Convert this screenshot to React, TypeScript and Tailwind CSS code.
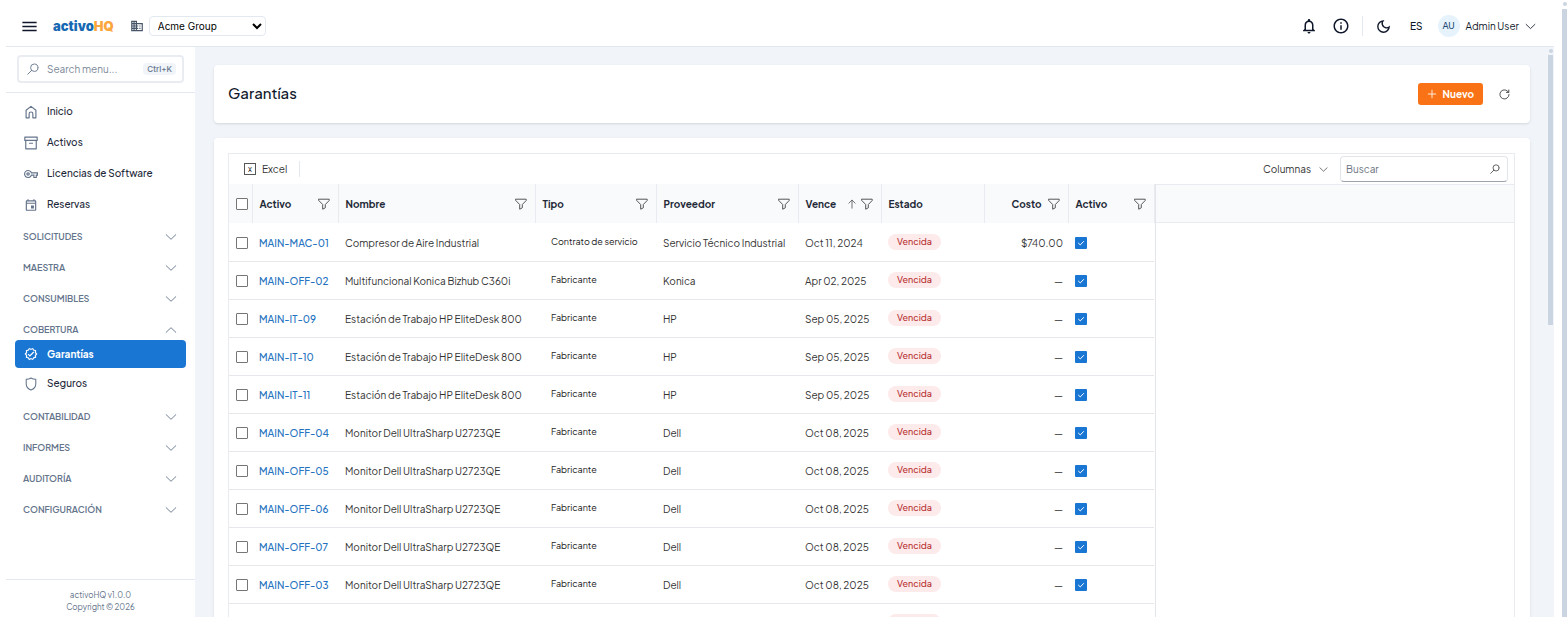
import React from 'react'
import { MdMenu, MdDomain, MdNotificationsNone, MdInfoOutline, MdOutlineVerified, MdOutlineVpnKey, MdOutlineEvent, MdOutlineDarkMode } from 'react-icons/md'

type IconProps = { className?: string }

const Stroke = ({ d, className = 'size-3', width = 1 }: { d: string; className?: string; width?: number }) => (
  <svg viewBox="0 0 12 12" className={className} fill="none" stroke="currentColor" strokeWidth={width} strokeLinecap="round" strokeLinejoin="round" aria-hidden="true">
    <path d={d} />
  </svg>
)

const ChevronDown = (p: IconProps) => <Stroke d="M1.2 3.7 6 8.3 10.8 3.7" width={0.9} {...p} />
const ChevronUp = (p: IconProps) => <Stroke d="M1.2 8.3 6 3.7 10.8 8.3" width={0.9} {...p} />
const Filter = (p: IconProps) => <Stroke d="M.8 1.2h10.4v1.3L7.3 6.5v3.3l-2.600 1.4V6.5L.8 2.5z" {...p} />
const ArrowUp = (p: IconProps) => <Stroke d="M6 11V1.5M2.3 5 6 1.3 9.7 5" {...p} />
const Search = (p: IconProps) => <Stroke d="M11 4.7a3.7 3.7 0 1 1-7.4 0a3.7 3.7 0 1 1 7.4 0M4.7 7.3.8 11.2" width={0.9} {...p} />
const Plus = (p: IconProps) => <Stroke d="M6 1.5v9M1.5 6h9" {...p} />
const Refresh = (p: IconProps) => <Stroke d="M10.7 1v2.7H8M10.5 3.7A5 5 0 1 0 11 6" width={0.9} {...p} />
const Home = (p: IconProps) => <Stroke d="M1.8 4.5 6 1.2l4.2 3.3V11H7.600V7.600a1.600 1.600 0 0 0-3.200 0V11H1.800z" {...p} />
const Archive = (p: IconProps) => <Stroke d="M.7 1h10.600v2.800H.7zM1.500 3.800V11h9V3.800M4.700 6.200h2.600" {...p} />
const Shield = (p: IconProps) => <Stroke d="M6 .9C4.8 1.7 3.3 2 1.9 2v4c0 2.500 1.600 4.200 4.100 5.200 2.500-1 4.100-2.700 4.100-5.200V2C8.700 2 7.200 1.700 6 .9z" width={0.9} {...p} />

const links = [
  { label: 'Inicio', icon: Home },
  { label: 'Activos', icon: Archive },
  { label: 'Licencias de Software', icon: MdOutlineVpnKey },
  { label: 'Reservas', icon: MdOutlineEvent },
]

const sectionsTop = ['Solicitudes', 'Maestra', 'Consumibles']
const sectionsBottom = ['Contabilidad', 'Informes', 'Auditoría', 'Configuración']

const rows = [
  ['MAIN-MAC-01', 'Compresor de Aire Industrial', 'Contrato de servicio', 'Servicio Técnico Industrial', 'Oct 11, 2024', '$740.00'],
  ['MAIN-OFF-02', 'Multifuncional Konica Bizhub C360i', 'Fabricante', 'Konica', 'Apr 02, 2025', '—'],
  ['MAIN-IT-09', 'Estación de Trabajo HP EliteDesk 800', 'Fabricante', 'HP', 'Sep 05, 2025', '—'],
  ['MAIN-IT-10', 'Estación de Trabajo HP EliteDesk 800', 'Fabricante', 'HP', 'Sep 05, 2025', '—'],
  ['MAIN-IT-11', 'Estación de Trabajo HP EliteDesk 800', 'Fabricante', 'HP', 'Sep 05, 2025', '—'],
  ['MAIN-OFF-04', 'Monitor Dell UltraSharp U2723QE', 'Fabricante', 'Dell', 'Oct 08, 2025', '—'],
  ['MAIN-OFF-05', 'Monitor Dell UltraSharp U2723QE', 'Fabricante', 'Dell', 'Oct 08, 2025', '—'],
  ['MAIN-OFF-06', 'Monitor Dell UltraSharp U2723QE', 'Fabricante', 'Dell', 'Oct 08, 2025', '—'],
  ['MAIN-OFF-07', 'Monitor Dell UltraSharp U2723QE', 'Fabricante', 'Dell', 'Oct 08, 2025', '—'],
  ['MAIN-OFF-03', 'Monitor Dell UltraSharp U2723QE', 'Fabricante', 'Dell', 'Oct 08, 2025', '—'],
  ['MAIN-OFF-08', 'Monitor Dell UltraSharp U2723QE', 'Fabricante', 'Dell', 'Oct 08, 2025', '—'],
]

const columns = [
  { label: 'Activo', filter: true },
  { label: 'Nombre', filter: true },
  { label: 'Tipo', filter: true },
  { label: 'Proveedor', filter: true },
  { label: 'Vence', filter: true, sorted: true },
  { label: 'Estado', filter: false },
  { label: 'Costo', filter: true, right: true },
  { label: 'Activo', filter: true },
]

const Header = () => (
  <header className="flex items-center h-[47px] shrink-0 pt-[6px] pl-[14px] pr-[18px] border-b border-[#e2e8f0] bg-white text-[#0f172a]">
    <button aria-label="Menú" className="mr-[14px]"><MdMenu size={19} /></button>
    <a href="#" className="mr-4 font-[Inter] text-[13px] leading-4 font-black text-[#1668b3]">activo<span className="text-[#fba63c]">HQ</span></a>
    <MdDomain size={14} className="mr-[5px] text-[#475569]" />
    <select aria-label="Empresa" className="w-[117px] h-5 pl-1 rounded-sm border border-[#e2e8f0] bg-white font-[Inter] text-[10px] text-black">
      <option>Acme Group</option>
    </select>
    <div className="flex items-center ml-auto">
      <button aria-label="Notificaciones" className="mr-[14px]"><MdNotificationsNone size={18} /></button>
      <button aria-label="Información" className="mr-3"><MdInfoOutline size={18} /></button>
      <div className="w-px h-5 mr-3 bg-[#e2e8f0]" />
      <button aria-label="Tema oscuro" className="mr-[18px]"><MdOutlineDarkMode size={17} /></button>
      <button className="mr-[15px] text-[10px] font-medium">ES</button>
      <button className="flex items-center gap-[6px] text-[10px]">
        <span className="flex items-center justify-center size-[22px] rounded-full bg-[#e6f3fd] text-[9px] font-medium text-[#1e4a73]">AU</span>
        <span>Admin User</span>
        <ChevronDown className="size-[11px]" />
      </button>
    </div>
  </header>
)

const Section = ({ label, open }: { label: string; open?: boolean }) => (
  <button aria-expanded={!!open} className="flex items-center justify-between w-full h-[31px] pl-[17px] pr-[18px] text-[9px] font-semibold uppercase text-[#64748b]">
    {label}
    {open ? <ChevronUp className="size-3" /> : <ChevronDown className="size-3" />}
  </button>
)

const Sidebar = () => (
  <aside className="flex flex-col w-[189px] shrink-0 bg-white text-[10px] font-medium text-[#1e293b]">
    <div className="px-[11px] pt-2 pb-[9px] border-b border-[#e2e8f0]">
      <label className="flex items-center h-7 pl-2 pr-[6px] border-2 border-[#e9edf2] rounded-sm text-[#64748b]">
        <Search className="size-3" />
        <input aria-label="Search menu" placeholder="Search menu..." className="flex-1 min-w-0 ml-2 text-[10px] font-normal outline-none placeholder:text-[#7b8797]" />
        <kbd className="px-1 rounded-sm bg-[#f1f5f9] font-[Inter] text-[8px] leading-3 font-medium">Ctrl+K</kbd>
      </label>
    </div>
    <nav className="flex flex-col pt-[3px]">
      {links.map(({ label, icon: Icon }) => (
        <a key={label} href="#" className="flex items-center gap-[9px] h-[31px] pl-[18px]">
          <Icon className="size-[14px] text-[#64748b]" />{label}
        </a>
      ))}
      <div className="pt-px">
        {sectionsTop.map((s) => <Section key={s} label={s} />)}
        <Section label="Cobertura" open />
      </div>
      <a href="#" aria-current="page" className="flex items-center gap-[9px] h-7 mx-[9px] -mt-[5px] pl-[9px] rounded-sm bg-[#1976d2] font-bold text-white">
        <MdOutlineVerified className="size-[14px]" />Garantías
      </a>
      <a href="#" className="flex items-center gap-[9px] h-[31px] pl-[18px]">
        <Shield className="size-[14px] text-[#64748b]" />Seguros
      </a>
      <div className="pt-[2px]">
        {sectionsBottom.map((s) => <Section key={s} label={s} />)}
      </div>
    </nav>
    <footer className="mt-auto pt-[9px] pb-1 border-t border-[#e2e8f0] text-center text-[8px] leading-3 font-normal text-[#64748b]">
      <p>activoHQ v1.0.0</p>
      <p>Copyright © 2026</p>
    </footer>
  </aside>
)

const boxClass = 'block size-3 appearance-none rounded-[1px] border border-[#767676] bg-white'

const DataTable = () => (
  <table className="w-[925px] shrink-0 table-fixed border-collapse text-[10px] leading-3 text-[#333333]">
    <colgroup>
      <col className="w-[23px]" />
      <col className="w-[86px]" />
      <col className="w-[197px]" />
      <col className="w-[121px]" />
      <col className="w-[142px]" />
      <col className="w-[83px]" />
      <col className="w-[103px]" />
      <col className="w-[84px]" />
      <col className="w-[86px]" />
    </colgroup>
    <thead>
      <tr className="h-[39px] bg-[#f8fafc] text-[#1f2937]">
        <th className="pl-[7px] border-r border-[#e8ebef]"><input type="checkbox" aria-label="Seleccionar todo" className={boxClass} /></th>
        {columns.map((c, i) => (
          <th key={i} className="pl-[7px] pr-[6px] border-r border-[#e8ebef] font-bold">
            <div className={c.right ? 'flex items-center justify-end gap-[6px] pr-[2px]' : 'flex items-center gap-1 pr-[2px]'}>
              <span className={c.right ? '' : 'mr-auto'}>{c.label}</span>
              {c.sorted && <ArrowUp className="size-[10px] text-[#555555]" />}
              {c.filter && <button aria-label={`Filtrar ${c.label}`}><Filter className="block size-3 text-[#555555]" /></button>}
            </div>
          </th>
        ))}
      </tr>
    </thead>
    <tbody>
      {rows.map(([code, name, type, vendor, due, cost]) => (
        <tr key={code} className="h-[38px] border-b border-[#e5e7eb]">
          <td className="pl-[7px] pt-[2px]"><input type="checkbox" aria-label={`Seleccionar ${code}`} className={boxClass} /></td>
          <td className="pl-[7px] pt-[2px] font-medium whitespace-nowrap"><a href="#" className="text-[#2472c0]">{code}</a></td>
          <td className="pl-[7px] pt-[2px] whitespace-nowrap">{name}</td>
          <td className="pl-4 text-[9px] whitespace-nowrap text-[#222222]">{type}</td>
          <td className="pl-[7px] pt-[2px] whitespace-nowrap">{vendor}</td>
          <td className="pl-[7px] pt-[2px] whitespace-nowrap">{due}</td>
          <td className="pl-[7px]"><span className="block w-[53px] rounded-full bg-[#fdeaea] text-center text-[9px] leading-4 font-medium text-[#b83232]">Vencida</span></td>
          <td className="pr-[5px] pt-[2px] text-right">{cost}</td>
          <td className="pl-[7px] pt-[2px]">
            <label className="relative block size-3 rounded-[1px] bg-[#1976d2] text-white">
              <input type="checkbox" aria-label={`${code} activo`} defaultChecked className="block size-3 appearance-none" />
              <Stroke d="M3.5 6.2 5.3 7.9 8.6 4.5" className="absolute inset-0 size-3" />
            </label>
          </td>
        </tr>
      ))}
    </tbody>
  </table>
)

const Grid = () => (
  <section className="flex-1 min-h-0 overflow-hidden pl-[14px] pr-[15px] pt-[15px] rounded-t bg-white shadow">
    <div className="border border-b-0 border-[#e8ebef]">
      <div className="flex items-center h-[30px] pl-[15px] pr-[6px] text-[10px] text-[#333333]">
        <button className="flex items-center gap-[6px] h-4 pr-3 border-r border-[#e2e8f0]">
          <span className="flex items-center justify-center size-3 border border-[#555555] text-[8px] leading-none">x</span>
          Excel
        </button>
        <button className="flex items-center gap-2 ml-auto mr-3">Columnas <ChevronDown className="size-[9px]" /></button>
        <label className="flex items-center w-[168px] h-[26px] px-[5px] border border-[#e2e5ea] border-b-[#9ca3af] rounded-sm">
          <input aria-label="Buscar" placeholder="Buscar" className="flex-1 min-w-0 outline-none placeholder:text-[#6b7280]" />
          <Search className="size-[10px] mr-[2px]" />
        </label>
      </div>
      <div className="flex">
        <DataTable />
        <div className="flex-1 border-l border-[#e2e5ea]">
          <div className="h-[39px] border-y border-[#e8ebef] bg-[#f8fafc]" />
        </div>
      </div>
    </div>
  </section>
)

const App = () => {
  return (
    <div className="flex h-screen overflow-hidden bg-white pl-[6px] font-['Plus_Jakarta_Sans',Inter,sans-serif]">
      <div className="flex flex-col flex-1 min-w-0">
        <Header />
        <div className="flex flex-1 min-h-0">
          <Sidebar />
          <main className="flex flex-col flex-1 min-w-0 gap-[15px] pt-[18px] pl-[19px] pr-[18px] bg-[#f1f5f9]">
            <section className="flex items-center h-[58px] shrink-0 pl-[14px] pr-[15px] rounded bg-white shadow-sm">
              <h1 className="pb-[2px] text-[15px] leading-5 font-medium text-[#0f172a]">Garantías</h1>
              <button className="flex items-center gap-[6px] h-[22px] ml-auto px-[9px] rounded-[3px] bg-[#f97316] text-[10px] font-bold text-white">
                <Plus className="size-[10px]" />Nuevo
              </button>
              <button aria-label="Actualizar" className="ml-4 mr-[5px]"><Refresh className="size-[11px] text-[#333333]" /></button>
            </section>
            <Grid />
          </main>
          <div className="flex flex-col items-center gap-[2px] w-[6px] pr-px pt-[2px] bg-[#f1f5f9]">
            <div className="size-1 rounded-full bg-[#cbd5e1]" />
            <div className="w-[5px] h-[270px] bg-[#cbd5e1]" />
          </div>
        </div>
      </div>
      <div className="flex flex-col items-center gap-[3px] w-[5px] ml-2 mr-px pt-[2px]">
        <div className="size-1 rounded-full bg-[#cbd5e1]" />
        <div className="w-[5px] flex-1 bg-[#cbd5e1]" />
      </div>
    </div>
  )
}

export default App
